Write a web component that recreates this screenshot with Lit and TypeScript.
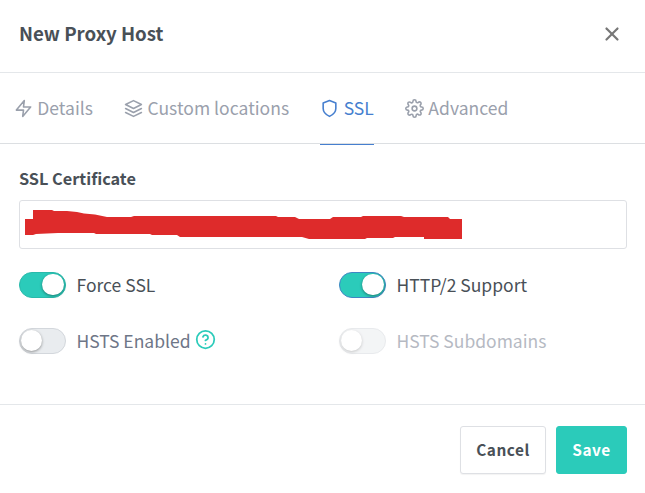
import { LitElement, html, css, svg } from "lit";
import { customElement, property } from "lit/decorators.js";

const icons: Record<string, unknown> = {
  zap: svg`<polygon points="13 2 3 14 12 14 11 22 21 10 12 10 13 2"/>`,
  layers: svg`<polygon points="12 2 2 7 12 12 22 7 12 2"/><polyline points="2 17 12 22 22 17"/><polyline points="2 12 12 17 22 12"/>`,
  shield: svg`<path d="M12 22s8-4 8-10V5l-8-3-8 3v7c0 6 8 10 8 10z"/>`,
  settings: svg`<circle cx="12" cy="12" r="3"/><path d="M19.4 15a1.65 1.65 0 0 0 .33 1.82l.06.06a2 2 0 0 1 0 2.83 2 2 0 0 1-2.83 0l-.06-.06a1.65 1.65 0 0 0-1.82-.33 1.65 1.65 0 0 0-1 1.51V21a2 2 0 0 1-2 2 2 2 0 0 1-2-2v-.09A1.65 1.65 0 0 0 9 19.4a1.65 1.65 0 0 0-1.82.33l-.06.06a2 2 0 0 1-2.83 0 2 2 0 0 1 0-2.83l.06-.06a1.65 1.65 0 0 0 .33-1.82 1.65 1.65 0 0 0-1.51-1H3a2 2 0 0 1-2-2 2 2 0 0 1 2-2h.09A1.65 1.65 0 0 0 4.6 9a1.65 1.65 0 0 0-.33-1.82l-.06-.06a2 2 0 0 1 0-2.83 2 2 0 0 1 2.83 0l.06.06a1.65 1.65 0 0 0 1.82.33H9a1.65 1.65 0 0 0 1-1.51V3a2 2 0 0 1 2-2 2 2 0 0 1 2 2v.09a1.65 1.65 0 0 0 1 1.51 1.65 1.65 0 0 0 1.82-.33l.06-.06a2 2 0 0 1 2.83 0 2 2 0 0 1 0 2.83l-.06.06a1.65 1.65 0 0 0-.33 1.82V9a1.65 1.65 0 0 0 1.51 1H21a2 2 0 0 1 2 2 2 2 0 0 1-2 2h-.09a1.65 1.65 0 0 0-1.51 1z"/>`,
  help: svg`<circle cx="12" cy="12" r="10"/><path d="M9.09 9a3 3 0 0 1 5.83 1c0 2-3 3-3 3"/><line x1="12" y1="17" x2="12" y2="17.01"/>`,
  close: svg`<line x1="18" y1="6" x2="6" y2="18"/><line x1="6" y1="6" x2="18" y2="18"/>`,
};

@customElement("ui-icon")
class UiIcon extends LitElement {
  @property() name = "";
  static styles = css`
    :host { display: block; width: 20px; height: 20px; flex: none; }
    svg { display: block; width: 100%; height: 100%; fill: none; stroke: currentColor;
      stroke-width: var(--icon-stroke, 2); stroke-linecap: round; stroke-linejoin: round; }
  `;
  render() {
    return html`<svg viewBox="0 0 24 24">${icons[this.name]}</svg>`;
  }
}

@customElement("ui-switch")
class UiSwitch extends LitElement {
  @property({ type: Boolean, reflect: true }) on = false;
  @property({ type: Boolean, reflect: true }) focused = false;
  @property({ type: Boolean, reflect: true }) disabled = false;
  static styles = css`
    :host { display: flex; align-items: center; height: 26px; color: #6e7687; }
    :host([on]) { color: #495057; }
    :host([disabled]) { opacity: 0.5; }
    .track { box-sizing: border-box; width: 47px; height: 26px; border-radius: 13px; flex: none;
      display: flex; align-items: flex-start; padding: 0.5px; background: #e9ecef;
      border: 1px solid #d3d7dc; margin-right: 10.5px; }
    :host([on]) .track { background: #2bcbba; border-color: #29b9ab; justify-content: flex-end; padding-right: 1.5px; }
    :host([focused]) .track { border-color: #3f86c4; }
    .knob { width: 21.5px; height: 21.5px; border-radius: 50%; background: #fff;
      box-shadow: 0 1px 3px rgba(0, 0, 0, 0.4); }
    .text { white-space: nowrap; line-height: 26px; height: 26px; }
  `;
  render() {
    return html`<span class="track"><span class="knob"></span></span><span class="text"><slot></slot></span>`;
  }
}

@customElement("app-root")
class AppRoot extends LitElement {
  static styles = css`
    :host { display: flex; flex-direction: column; height: 493px; overflow: hidden; background: #fff;
      font: 17.5px/26px "Noto Sans CJK SC", "Noto Sans", sans-serif; color: #495057; }
    header { box-sizing: border-box; height: 73px; padding: 0 22px 5px 19px; border-bottom: 1px solid #e4e7ea;
      display: flex; align-items: center; justify-content: space-between; }
    .title { font-size: 18.7px; font-weight: 700; line-height: 26px; padding-bottom: 2px; }
    .close { width: 22px; height: 22px; color: #777; --icon-stroke: 2.4; }
    nav { box-sizing: border-box; height: 71px; border-bottom: 1px solid #dcdfe2; display: flex; padding-left: 13.5px; }
    .tab { box-sizing: border-box; height: 72px; display: flex; align-items: center; gap: 4.7px;
      color: #9aa0ac; border-bottom: 1px solid transparent; margin-right: 30.8px; white-space: nowrap; }
    .tab.active { color: #467fcf; border-color: #467fcf; }
    .tab ui-icon { width: 19px; height: 19px; }
    .tab span { padding-bottom: 1px; letter-spacing: 0.03px; }
    main { flex: 1; padding: 21px 18px 0 19px; }
    .label { font-size: 16.3px; font-weight: 700; line-height: 26px; height: 35px; }
    .field { box-sizing: border-box; height: 49px; border: 1px solid #dee0e4; border-radius: 3px; }
    .redaction { display: block; width: 606px; height: 47px; fill: #de2b2b; }
    .options { display: grid; grid-template-columns: 320px 1fr; row-gap: 30px; margin-top: 23px; }
    .option { display: flex; align-items: center; }
    .help { width: 21px; height: 21px; margin: 0 0 3px 4px; color: #2bcbba; }
    footer { box-sizing: border-box; height: 89px; border-top: 1px solid #e4e7ea; padding: 21px 18px 0;
      display: flex; justify-content: flex-end; gap: 10px; }
    button { box-sizing: border-box; height: 48px; border-radius: 3px; border: 1px solid #dee0e4; padding: 0 0 2px;
      font: 700 15.4px/24px "Noto Sans CJK SC", sans-serif; letter-spacing: 0.5px; color: #495057; background: #fff; }
    .cancel { width: 86px; box-shadow: 0 1px 1px rgba(0, 0, 0, 0.05); }
    .save { width: 71px; background: #2bcbba; border-color: #2bcbba; color: #fff; }
  `;
  render() {
    return html`
      <header><span class="title">New Proxy Host</span><ui-icon class="close" name="close"></ui-icon></header>
      <nav>
        <div class="tab"><ui-icon name="zap"></ui-icon><span>Details</span></div>
        <div class="tab"><ui-icon name="layers"></ui-icon><span>Custom locations</span></div>
        <div class="tab active"><ui-icon name="shield"></ui-icon><span>SSL</span></div>
        <div class="tab"><ui-icon name="settings"></ui-icon><span>Advanced</span></div>
      </nav>
      <main>
        <div class="label">SSL Certificate</div>
        <div class="field">
          <svg class="redaction" viewBox="20 201 606 47">
            <path d="M33 210H52L54 211H67L77 212L84 213.5L95 214.5L107 217H131L134 216H276L278 217H295L299 219H330L333 217H361L363 216H401L404 217H448L450 219H462V239H424V237H395L393 238H367L365 239H309L302 237H180L177 235H152L150 234H96L94 233H58L36 234L33 235H25V219H33Z"/>
          </svg>
        </div>
        <div class="options">
          <div class="option"><ui-switch on>Force SSL</ui-switch></div>
          <div class="option"><ui-switch on focused>HTTP/2 Support</ui-switch></div>
          <div class="option"><ui-switch>HSTS Enabled</ui-switch><ui-icon class="help" name="help"></ui-icon></div>
          <div class="option"><ui-switch disabled>HSTS Subdomains</ui-switch></div>
        </div>
      </main>
      <footer><button class="cancel">Cancel</button><button class="save">Save</button></footer>
    `;
  }
}
